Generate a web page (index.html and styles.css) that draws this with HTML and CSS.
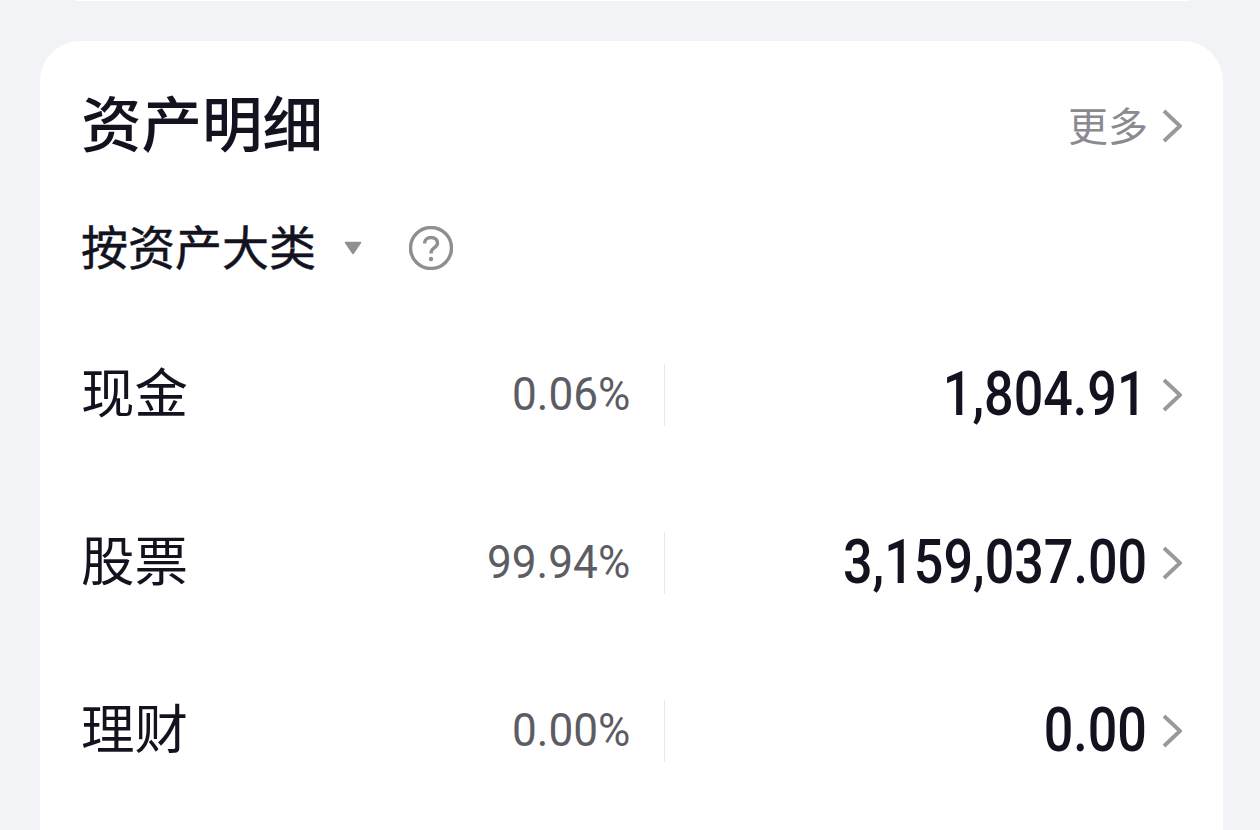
FILE: index.html
```html
<!DOCTYPE html>
<html lang="zh-CN">
<head>
<meta charset="utf-8">
<title>资产明细</title>
<link rel="stylesheet" href="styles.css">
</head>
<body>
<div class="prev-card"></div>
<main class="card">
  <header class="card-head">
    <h1 class="title">资产明细</h1>
    <a class="more"><span class="more-text">更多</span><svg class="chev" viewBox="0 0 20 34"><path d="M2 2 L18 17 L2 32"/></svg></a>
  </header>
  <div class="filter">
    <span class="filter-label">按资产大类</span>
    <svg class="caret" viewBox="0 0 18 14"><path d="M1.5 1.5 H16.5 L9 12.5 Z"/></svg>
    <svg class="help" viewBox="0 0 44 44"><circle cx="22" cy="22" r="20.5"/><path d="M15.5 17.5 C15.5 13.5 18.5 11.5 22 11.5 C25.5 11.5 28.5 13.5 28.5 17 C28.5 20 26.5 21 24.5 22.5 C22.8 23.8 22 24.8 22 27.5"/><circle class="dot" cx="22" cy="33" r="2.2"/></svg>
  </div>
  <section class="row">
    <span class="name">现金</span><span class="pct"><span class="squeeze">0.06%</span></span><i class="divider"></i>
    <span class="value"><span class="squeeze">1,804.91</span></span>
    <svg class="chev" viewBox="0 0 20 34"><path d="M2 2 L18 17 L2 32"/></svg>
  </section>
  <section class="row">
    <span class="name">股票</span><span class="pct"><span class="squeeze">99.94%</span></span><i class="divider"></i>
    <span class="value"><span class="squeeze">3,159,037.00</span></span>
    <svg class="chev" viewBox="0 0 20 34"><path d="M2 2 L18 17 L2 32"/></svg>
  </section>
  <section class="row">
    <span class="name">理财</span><span class="pct"><span class="squeeze">0.00%</span></span><i class="divider"></i>
    <span class="value"><span class="squeeze">0.00</span></span>
    <svg class="chev" viewBox="0 0 20 34"><path d="M2 2 L18 17 L2 32"/></svg>
  </section>
</main>
</body>
</html>
```
FILE: styles.css
```css
html, body { margin: 0; padding: 0; height: 830px; overflow: hidden; }
body {
  background: #f2f3f7;
  font-family: "Noto Sans CJK SC", "Noto Sans", sans-serif;
  color: #12131f;
}
.prev-card { height: 1px; width: 1114px; margin-left: 76px; background: #fff; }
.card {
  margin: 40px 37px 0 40px;
  height: 789px;
  overflow: hidden;
  background: #fff;
  border-radius: 40px 40px 0 0;
  padding: 0 41px 0 41px;
}
.card-head { display: flex; align-items: flex-start; justify-content: space-between; height: 170px; }
.title { margin: 0; font-size: 60.5px; font-weight: 500; line-height: 160px; }
.more { display: flex; align-items: center; height: 170px; font-size: 40px; color: #8a8a90; line-height: 1; }
.more-text { padding-bottom: 4px; margin-right: -1px; }
.chev { width: 20px; height: 34px; margin-left: 15px; flex: none; }
.chev path { fill: none; stroke: #98989d; stroke-width: 3.8; }
.filter { display: flex; align-items: center; height: 74px; margin-bottom: 26px; }
.filter-label { font-size: 47px; font-weight: 400; line-height: 1; padding-bottom: 8px; -webkit-text-stroke: 0.5px #12131f; }
.caret { width: 18px; height: 14px; margin-left: 28px; fill: #8e8e93; stroke: #8e8e93; stroke-width: 1.5; stroke-linejoin: round; }
.help { width: 44px; height: 44px; margin-left: 47px; fill: none; stroke: #8e8e93; stroke-width: 3.4; }
.help .dot { fill: #8e8e93; stroke: none; }
.row { display: flex; align-items: center; height: 168px; }
.name { width: 200px; font-size: 53.5px; line-height: 1; padding-bottom: 10px; }
.pct {
  width: 349px;
  text-align: right;
  font-family: Roboto, sans-serif;
  font-size: 46px;
  color: #5c5d64;
  padding-bottom: 2px;
}
.divider { display: block; width: 1px; height: 62px; margin-left: 34px; background: #e8e8ec; }
.value {
  flex: 1;
  text-align: right;
  font-family: Roboto, sans-serif;
  font-size: 62px;
  font-weight: 500;
  padding-bottom: 4px;
}
.squeeze { display: inline-block; transform: scaleX(0.84); transform-origin: right center; }
.pct .squeeze { transform: scaleX(0.96); }
```
